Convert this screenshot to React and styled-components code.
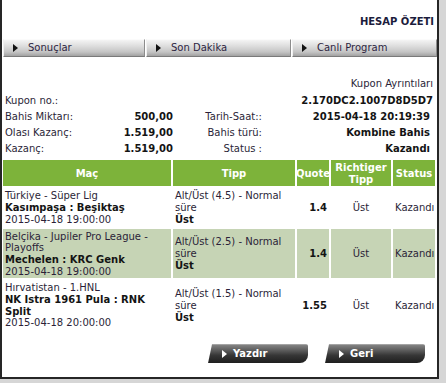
import React from "react";
import styled, { createGlobalStyle } from "styled-components";

const GlobalStyle = createGlobalStyle`
  html, body { margin: 0; padding: 0; }
  body {
    background: #d6d6d6;
    font-family: "DejaVu Sans", Verdana, sans-serif;
    font-size: 10px;
    color: #2b1f38;
  }
`;

const Frame = styled.div`
  box-sizing: border-box;
  width: 439px;
  height: 379px;
  background: #fff;
  border-left: 2px solid #262626;
  border-right: 2px solid #262626;
  border-bottom: 2px solid #262626;
  display: flex;
  flex-direction: column;
`;

const Title = styled.h1`
  margin: 16px 0 0;
  padding-right: 3px;
  height: 12px;
  line-height: 12px;
  font-size: 10px;
  font-weight: bold;
  text-align: right;
  color: #1c1c3c;
`;

const NavBar = styled.nav`
  margin: 11px 0 0 1px;
  display: grid;
  grid-template-columns: 142px 145px 145px;
  column-gap: 1px;
  height: 18px;
`;

const NavItem = styled.div`
  box-sizing: border-box;
  display: flex;
  align-items: center;
  gap: 10px;
  padding-left: 9px;
  background: linear-gradient(#f4f4f4, #dcdcdc 40%, #c4c4c4 75%, #a2a2a2);
  border-top: 1px solid #fbfbfb;
  border-left: 1px solid #f0f0f0;
  border-right: 1px solid #8c8c8c;
  border-bottom: 1px solid #7a7a7a;
  color: #2d1f3f;
  line-height: 12px;
`;

const Arrow = styled.span`
  width: 0;
  height: 0;
  border-top: 4px solid transparent;
  border-bottom: 4px solid transparent;
  border-left: 5px solid ${(p) => p.$color};
`;

const Summary = styled.section`
  margin-top: 19px;
  padding: 0 4px 0 3px;
`;

const Caption = styled.div`
  height: 17px;
  line-height: 16px;
  text-align: right;
`;

const InfoGrid = styled.div`
  display: grid;
  grid-template-columns: 100px 68px 89px 1fr;
  grid-auto-rows: 16px;
  line-height: 16px;
`;

const InfoLabel = styled.div`
  text-align: ${(p) => (p.$right ? "right" : "left")};
  white-space: nowrap;
`;

const InfoValue = styled.div`
  text-align: right;
  font-weight: bold;
  white-space: nowrap;
  color: #141414;
  grid-column: ${(p) => p.$span || "auto"};
  padding-right: ${(p) => (p.$inset ? "3px" : "0")};
`;

const BetGrid = styled.div`
  margin: 3px 0 0 1px;
  display: grid;
  grid-template-columns: 168px 122px 32px 60px 42px;
  gap: 2px;
  line-height: 11.7px;
`;

const HeadCell = styled.div`
  background: #7db33a;
  color: #fff;
  font-weight: bold;
  text-align: center;
  padding: 2px 1px 1px;
  display: flex;
  align-items: center;
  justify-content: center;
`;

const Cell = styled.div`
  background: ${(p) => (p.$alt ? "#c6d4b5" : "#fff")};
  padding: 2px 2px 1px;
  display: flex;
  flex-direction: column;
  justify-content: ${(p) => (p.$top ? "flex-start" : "center")};
  text-align: ${(p) => p.$align || "left"};
  font-weight: ${(p) => (p.$bold ? "bold" : "normal")};
  color: ${(p) => (p.$bold ? "#141414" : "inherit")};
`;

const Strong = styled.b`
  color: #141414;
`;

const Actions = styled.div`
  margin-top: 14px;
  padding-right: 12px;
  display: flex;
  justify-content: flex-end;
  gap: 17px;
`;

const ActionButton = styled.button`
  box-sizing: border-box;
  width: 100px;
  height: 19px;
  display: flex;
  align-items: center;
  gap: 6px;
  padding: 0 0 0 14px;
  border: none;
  clip-path: polygon(4px 0, 100% 0, 100% 100%, 0 100%);
  border-radius: 0 2px 8px 0;
  background: linear-gradient(#8a8a8a, #5a5a5a 35%, #363636 60%, #1e1e1e);
  color: #fff;
  font-family: inherit;
  font-size: 10px;
  font-weight: bold;
  cursor: pointer;
`;

const info = [
  ["Bahis Miktarı:", "500,00", "Tarih-Saat::", "2015-04-18 20:19:39"],
  ["Olası Kazanç:", "1.519,00", "Bahis türü:", "Kombine Bahis"],
  ["Kazanç:", "1.519,00", "Status :", "Kazandı"],
];

const bets = [
  {
    league: "Türkiye - Süper Lig",
    match: "Kasımpaşa : Beşiktaş",
    date: "2015-04-18 19:00:00",
    tip: "Alt/Üst (4.5) - Normal süre",
    pick: "Üst",
    quote: "1.4",
  },
  {
    league: "Belçika - Jupiler Pro League - Playoffs",
    match: "Mechelen : KRC Genk",
    date: "2015-04-18 19:00:00",
    tip: "Alt/Üst (2.5) - Normal süre",
    pick: "Üst",
    quote: "1.4",
  },
  {
    league: "Hırvatistan - 1.HNL",
    match: "NK Istra 1961 Pula : RNK Split",
    date: "2015-04-18 20:00:00",
    tip: "Alt/Üst (1.5) - Normal süre",
    pick: "Üst",
    quote: "1.55",
  },
];

export default function App() {
  return (
    <>
      <GlobalStyle />
      <Frame>
        <Title>HESAP ÖZETI</Title>
        <NavBar>
          {["Sonuçlar", "Son Dakika", "Canlı Program"].map((t) => (
            <NavItem key={t}>
              <Arrow $color="#111" />
              {t}
            </NavItem>
          ))}
        </NavBar>
        <Summary>
          <Caption>Kupon Ayrıntıları</Caption>
          <InfoGrid>
            <InfoLabel>Kupon no.:</InfoLabel>
            <InfoValue $span="2 / -1">2.170DC2.1007D8D5D7</InfoValue>
            {info.map(([l1, v1, l2, v2]) => (
              <React.Fragment key={l1}>
                <InfoLabel>{l1}</InfoLabel>
                <InfoValue>{v1}</InfoValue>
                <InfoLabel $right>{l2}</InfoLabel>
                <InfoValue $inset>{v2}</InfoValue>
              </React.Fragment>
            ))}
          </InfoGrid>
        </Summary>
        <BetGrid>
          <HeadCell>Maç</HeadCell>
          <HeadCell>Tipp</HeadCell>
          <HeadCell>Quote</HeadCell>
          <HeadCell>Richtiger Tipp</HeadCell>
          <HeadCell>Status</HeadCell>
          {bets.map((b, i) => {
            const alt = i % 2 === 1;
            return (
              <React.Fragment key={b.match}>
                <Cell $alt={alt} $top>
                  <span>{b.league}</span>
                  <Strong>{b.match}</Strong>
                  <span>{b.date}</span>
                </Cell>
                <Cell $alt={alt}>
                  <span>{b.tip}</span>
                  <Strong>{b.pick}</Strong>
                </Cell>
                <Cell $alt={alt} $align="right" $bold>
                  {b.quote}
                </Cell>
                <Cell $alt={alt} $align="center">
                  Üst
                </Cell>
                <Cell $alt={alt} $align="center">
                  Kazandı
                </Cell>
              </React.Fragment>
            );
          })}
        </BetGrid>
        <Actions>
          <ActionButton>
            <Arrow $color="#fff" />
            Yazdır
          </ActionButton>
          <ActionButton>
            <Arrow $color="#fff" />
            Geri
          </ActionButton>
        </Actions>
      </Frame>
    </>
  );
}
